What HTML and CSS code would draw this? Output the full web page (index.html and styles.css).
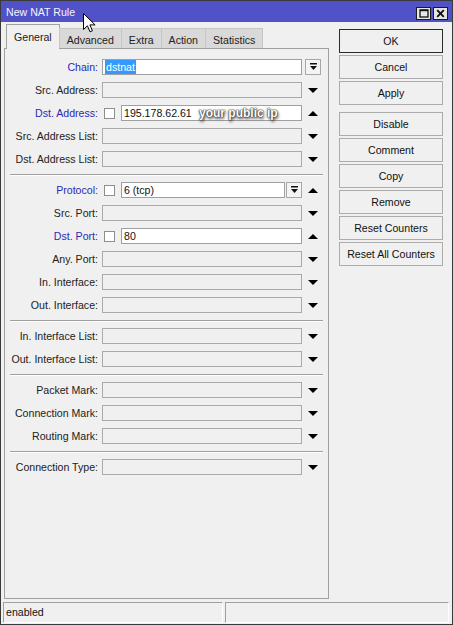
FILE: index.html
```html
<!DOCTYPE html>
<html lang="en">
<head>
    <meta charset="UTF-8">
    <meta name="viewport" content="width=device-width, initial-scale=1.0">
    <title>New NAT Rule</title>
    <link rel="stylesheet" href="styles.css">
</head>
<body>
    <div class="window">
        <div class="titlebar">
            <span class="title">New NAT Rule</span>
            <div class="title-buttons">
                <span class="tbtn">
                    <svg width="10" height="9" viewBox="0 0 10 9"><rect x="1" y="1" width="8" height="7" fill="none" stroke="#111" stroke-width="1.3"/><rect x="1" y="0.6" width="8" height="1.6" fill="#111"/></svg>
                </span>
                <span class="tbtn">
                    <svg width="9" height="9" viewBox="0 0 9 9"><path d="M1.2 1.2L7.8 7.8M7.8 1.2L1.2 7.8" stroke="#111" stroke-width="1.9"/></svg>
                </span>
            </div>
            <!-- mouse pointer over the caption -->
            <svg class="cursor" width="13" height="20" viewBox="0 0 13 20"><path d="M0.5 0.5V16.5L4.4 12.8L7 18.8L9.4 17.8L6.9 11.9H12.1Z" fill="#fff" stroke="#000" stroke-width="1" stroke-linejoin="round"/></svg>
        </div>

        <div class="main">
            <div class="left">
                <div class="tabs">
                    <div class="tab active">General</div>
                    <div class="tab">Advanced</div>
                    <div class="tab">Extra</div>
                    <div class="tab">Action</div>
                    <div class="tab">Statistics</div>
                </div>
                <div class="panel">
                    <div class="group">
                        <div class="row">
                            <span class="lbl key">Chain:</span>
                            <div class="field"><span class="input filled"><span class="sel">dstnat</span></span></div>
                            <span class="slot"><span class="drop"><svg width="9" height="8" viewBox="0 0 9 8"><rect x="1" y="0" width="7" height="1.5" fill="#111"/><path d="M1 3H8L4.5 7Z" fill="#111"/></svg></span></span>
                        </div>
                        <div class="row">
                            <span class="lbl">Src. Address:</span>
                            <div class="field"><span class="input"></span></div>
                            <span class="slot"><i class="down"></i></span>
                        </div>
                        <div class="row">
                            <span class="lbl key">Dst. Address:</span>
                            <div class="field"><span class="check"></span><span class="input filled">195.178.62.61<span class="note">your public ip</span></span></div>
                            <span class="slot"><i class="up"></i></span>
                        </div>
                        <div class="row">
                            <span class="lbl">Src. Address List:</span>
                            <div class="field"><span class="input"></span></div>
                            <span class="slot"><i class="down"></i></span>
                        </div>
                        <div class="row">
                            <span class="lbl">Dst. Address List:</span>
                            <div class="field"><span class="input"></span></div>
                            <span class="slot"><i class="down"></i></span>
                        </div>
                    </div>
                    <div class="sep"></div>
                    <div class="group">
                        <div class="row">
                            <span class="lbl key">Protocol:</span>
                            <div class="field"><span class="check"></span><span class="input filled">6 (tcp)</span><span class="drop"><svg width="9" height="8" viewBox="0 0 9 8"><rect x="1" y="0" width="7" height="1.5" fill="#111"/><path d="M1 3H8L4.5 7Z" fill="#111"/></svg></span></div>
                            <span class="slot"><i class="up"></i></span>
                        </div>
                        <div class="row">
                            <span class="lbl">Src. Port:</span>
                            <div class="field"><span class="input"></span></div>
                            <span class="slot"><i class="down"></i></span>
                        </div>
                        <div class="row">
                            <span class="lbl key">Dst. Port:</span>
                            <div class="field"><span class="check"></span><span class="input filled">80</span></div>
                            <span class="slot"><i class="up"></i></span>
                        </div>
                        <div class="row">
                            <span class="lbl">Any. Port:</span>
                            <div class="field"><span class="input"></span></div>
                            <span class="slot"><i class="down"></i></span>
                        </div>
                        <div class="row">
                            <span class="lbl">In. Interface:</span>
                            <div class="field"><span class="input"></span></div>
                            <span class="slot"><i class="down"></i></span>
                        </div>
                        <div class="row">
                            <span class="lbl">Out. Interface:</span>
                            <div class="field"><span class="input"></span></div>
                            <span class="slot"><i class="down"></i></span>
                        </div>
                    </div>
                    <div class="sep"></div>
                    <div class="group">
                        <div class="row">
                            <span class="lbl">In. Interface List:</span>
                            <div class="field"><span class="input"></span></div>
                            <span class="slot"><i class="down"></i></span>
                        </div>
                        <div class="row">
                            <span class="lbl">Out. Interface List:</span>
                            <div class="field"><span class="input"></span></div>
                            <span class="slot"><i class="down"></i></span>
                        </div>
                    </div>
                    <div class="sep"></div>
                    <div class="group">
                        <div class="row">
                            <span class="lbl">Packet Mark:</span>
                            <div class="field"><span class="input"></span></div>
                            <span class="slot"><i class="down"></i></span>
                        </div>
                        <div class="row">
                            <span class="lbl">Connection Mark:</span>
                            <div class="field"><span class="input"></span></div>
                            <span class="slot"><i class="down"></i></span>
                        </div>
                        <div class="row">
                            <span class="lbl">Routing Mark:</span>
                            <div class="field"><span class="input"></span></div>
                            <span class="slot"><i class="down"></i></span>
                        </div>
                    </div>
                    <div class="sep"></div>
                    <div class="group">
                        <div class="row">
                            <span class="lbl">Connection Type:</span>
                            <div class="field"><span class="input"></span></div>
                            <span class="slot"><i class="down"></i></span>
                        </div>
                    </div>
                </div>
            </div>

            <div class="buttons">
                <div class="btn default">OK</div>
                <div class="btn">Cancel</div>
                <div class="btn">Apply</div>
                <div class="btn spaced">Disable</div>
                <div class="btn">Comment</div>
                <div class="btn">Copy</div>
                <div class="btn">Remove</div>
                <div class="btn">Reset Counters</div>
                <div class="btn">Reset All Counters</div>
            </div>
        </div>

        <div class="statusbar">
            <div class="cell">enabled</div>
            <div class="cell wide"></div>
        </div>
    </div>
</body>
</html>
```

FILE: styles.css
```css
body {
    margin: 0;
    background: #f0f0f0;
    font-family: "Liberation Sans", Arial, sans-serif;
    font-size: 10.6px;
    color: #1e1e1e;
}
.window {
    width: 453px;
    height: 625px;
    box-sizing: border-box;
    border: 1px solid #3a3a3a;
    display: flex;
    flex-direction: column;
    background: #f0f0f0;
}

/* caption */
.titlebar {
    height: 21px;
    flex: none;
    box-sizing: border-box;
    background: #5252c8;
    display: flex;
    align-items: flex-end;
    justify-content: space-between;
    padding: 0 4px 2px 5px;
    position: relative;
}
.title {
    color: #f4f4ff;
    line-height: 14px;
    padding-bottom: 1px;
}
.title-buttons {
    display: flex;
    gap: 2px;
}
.tbtn {
    width: 15px;
    height: 13px;
    box-sizing: border-box;
    border: 1px solid #1a1a1a;
    background: #e6e6e6;
    display: flex;
    align-items: center;
    justify-content: center;
}
.cursor {
    position: absolute;
    left: 82px;
    top: 12px;
    z-index: 5;
}

.main {
    flex: 1;
    display: flex;
}
.left {
    padding: 2px 0 0 3px;
}

/* tabs */
.tabs {
    display: flex;
    align-items: flex-end;
    height: 25px;
    padding-left: 2px;
    position: relative;
    z-index: 1;
}
.tab {
    height: 20px;
    box-sizing: border-box;
    margin-bottom: 1px;
    margin-left: -1px;
    padding: 3px 7px 0;
    line-height: 16px;
    background: #d9d9d9;
    border: 1px solid #c6c6c6;
    border-bottom: none;
    color: #222;
}
.tab.active {
    height: 25px;
    margin: 0;
    padding-top: 4px;
    background: #f0f0f0;
    border-color: #a0a0a0;
}

.panel {
    width: 325px;
    height: 551px;
    box-sizing: border-box;
    margin-top: -1px;
    border: 1px solid #a0a0a0;
    padding-top: 10px;
}
.group {
    display: flex;
    flex-direction: column;
    gap: 7px;
}
.sep {
    margin: 7px 5px 6px 5px;
    border-top: 1px solid #a0a0a0;
    border-bottom: 1px solid #fff;
}
.row {
    display: flex;
    align-items: center;
    height: 16px;
}
.lbl {
    width: 93px;
    margin-right: 4px;
    text-align: right;
    white-space: nowrap;
    color: #222;
}
.lbl.key {
    color: #2a2ab4;
}
.field {
    width: 200px;
    height: 16px;
    display: flex;
    align-items: center;
}
.input {
    flex: 1;
    height: 16px;
    box-sizing: border-box;
    border: 1px solid #aaaaaa;
    background: #f0f0f0;
    padding-left: 2px;
    line-height: 14px;
    white-space: nowrap;
    position: relative;
    color: #111;
}
.input.filled {
    background: #fff;
    border-color: #a0a0a0;
}
.sel {
    display: inline-block;
    background: #3399ff;
    color: #fff;
    padding: 0 1px;
}
.check {
    width: 11px;
    height: 11px;
    box-sizing: border-box;
    border: 1px solid #8e8e8e;
    background: #fff;
    margin: 0 6px 0 2px;
}
.drop {
    width: 16px;
    height: 16px;
    flex: none;
    box-sizing: border-box;
    border: 1px solid #a8a8a8;
    background: #f4f4f4;
    margin-left: 1px;
    display: flex;
    align-items: center;
    justify-content: center;
}
.slot .drop {
    margin-left: 0;
}
.slot {
    width: 16px;
    margin-left: 3px;
    display: flex;
    align-items: center;
    justify-content: center;
}
.down {
    border-left: 5px solid transparent;
    border-right: 5px solid transparent;
    border-top: 5px solid #000;
}
.up {
    border-left: 5px solid transparent;
    border-right: 5px solid transparent;
    border-bottom: 5px solid #000;
}
.note {
    position: absolute;
    left: 77px;
    top: -1px;
    font-size: 12px;
    font-weight: bold;
    line-height: 16px;
    color: #fff;
    text-shadow: 0 0 1px #333, 0 0 1px #333, 0 0 2px #444, 1px 2px 3px #333;
}

/* right side */
.buttons {
    margin-left: 10px;
    padding-top: 7px;
    display: flex;
    flex-direction: column;
    gap: 2px;
}
.btn {
    width: 104px;
    height: 24px;
    box-sizing: border-box;
    border: 1px solid #acacac;
    background: #f0f0f0;
    text-align: center;
    line-height: 22px;
    color: #111;
}
.btn.default {
    border-color: #2a2a2a;
}
.btn.spaced {
    margin-top: 5px;
}

/* status */
.statusbar {
    flex: none;
    display: flex;
    gap: 2px;
    height: 21px;
    margin: 3px 0 1px;
    padding: 0 3px 0 2px;
}
.cell {
    width: 220px;
    height: 21px;
    box-sizing: border-box;
    border: 1px solid;
    border-color: #a0a0a0 #fff #fff #a0a0a0;
    padding-left: 2px;
    line-height: 19px;
    color: #111;
}
.cell.wide {
    width: auto;
    flex: 1;
}
```
